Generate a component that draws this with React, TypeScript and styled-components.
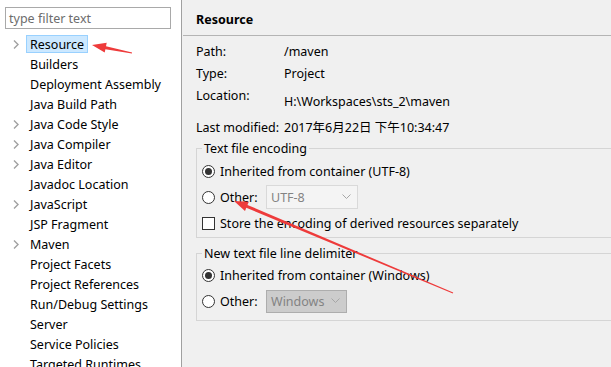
import styled, { createGlobalStyle } from "styled-components";

const GlobalStyle = createGlobalStyle`
  html, body {
    margin: 0;
    padding: 0;
    overflow: hidden;
    background: #f0f0f0;
  }
  body {
    font-family: "Noto Sans", "Noto Sans CJK SC", sans-serif;
    font-size: 12px;
    color: #000;
  }
`;

const Window = styled.div`
  position: relative;
  display: flex;
  width: 611px;
  height: 367px;
  overflow: hidden;
`;

const Sidebar = styled.div`
  width: 182px;
  flex-shrink: 0;
  background: #fff;
  border-right: 1px solid #a0a0a0;
  padding-top: 7px;
  box-sizing: border-box;
`;

const Filter = styled.div`
  margin-left: 5px;
  width: 166px;
  height: 22px;
  box-sizing: border-box;
  border: 1px solid #a9a9a9;
  padding-left: 3px;
  display: flex;
  align-items: center;
  color: #6d6d6d;
  font-size: 12.5px;
`;

const Tree = styled.ul`
  list-style: none;
  margin: 5px 0 0;
  padding: 0;
`;

const TreeRow = styled.li`
  height: 20px;
  display: flex;
  align-items: center;
  padding-left: 13px;
`;

const Twisty = styled.span`
  width: 13px;
  display: flex;
  align-items: center;
`;

const TreeLabel = styled.span<{ $selected?: boolean }>`
  height: 18px;
  line-height: 17px;
  box-sizing: border-box;
  padding: 0 3px;
  font-size: 12.5px;
  white-space: nowrap;
  border: 1px solid ${(p) => (p.$selected ? "#99d1ff" : "transparent")};
  background: ${(p) => (p.$selected ? "#cce8ff" : "transparent")};
`;

const Content = styled.div`
  flex: 1;
  margin-left: 1px;
  background: #f0f0f0;
  overflow: hidden;
`;

const Header = styled.div`
  height: 36px;
  box-sizing: border-box;
  border-bottom: 1px solid #b4b4b4;
  padding: 4px 0 0 13px;
  display: flex;
  align-items: center;
  font-weight: bold;
  font-size: 12.5px;
`;

const Body = styled.div`
  padding: 5px 0 0 13px;
`;

const InfoRow = styled.div<{ $h: number }>`
  display: grid;
  grid-template-columns: 88px auto;
  height: ${(p) => p.$h}px;
  line-height: 22px;
  white-space: nowrap;
  font-size: 12.5px;
`;

const InfoValue = styled.span<{ $offset?: number }>`
  padding-top: ${(p) => p.$offset || 0}px;
`;

const Group = styled.fieldset<{ $top: number; $pad: number; $bottom: number }>`
  margin: ${(p) => p.$top}px -20px 0 0;
  padding: ${(p) => p.$pad}px 0 ${(p) => p.$bottom}px 5px;
  border: 1px solid #d5d5d5;
  min-width: 0;
`;

const Legend = styled.legend`
  padding: 0 2px;
  font-size: 12.5px;
  line-height: 17px;
`;

const Option = styled.div`
  height: 26px;
  display: flex;
  align-items: center;
  gap: 5px;
  white-space: nowrap;
  font-size: 12.5px;
`;

const Radio = styled.span<{ $checked?: boolean }>`
  width: 13px;
  height: 13px;
  box-sizing: border-box;
  border-radius: 50%;
  border: 1px solid #333;
  background: #fff;
  display: flex;
  align-items: center;
  justify-content: center;
  flex-shrink: 0;
  &::after {
    content: "";
    width: 7px;
    height: 7px;
    border-radius: 50%;
    background: #333;
    display: ${(p) => (p.$checked ? "block" : "none")};
  }
`;

const Checkbox = styled.span`
  width: 13px;
  height: 13px;
  box-sizing: border-box;
  border: 1px solid #333;
  background: #fff;
  flex-shrink: 0;
`;

const OtherLabel = styled.span`
  width: 41px;
`;

const Combo = styled.div<{ $w: number; $h: number; $dark?: boolean }>`
  width: ${(p) => p.$w}px;
  height: ${(p) => p.$h}px;
  box-sizing: border-box;
  border: 1px solid ${(p) => (p.$dark ? "#adadad" : "#d9d9d9")};
  background: ${(p) => (p.$dark ? "#cccccc" : "#f4f4f4")};
  display: flex;
  align-items: center;
  justify-content: space-between;
  padding: 0 6px 0 4px;
  color: #838383;
`;

const Chevron = () => (
  <svg width="9" height="6" viewBox="0 0 9 6">
    <polyline points="0.5,0.5 4.5,4.5 8.5,0.5" fill="none" stroke="#a6a6a6" strokeWidth="1" />
  </svg>
);

const Twist = () => (
  <svg width="6" height="9" viewBox="0 0 6 9">
    <polyline points="1,0.5 5,4.5 1,8.5" fill="none" stroke="#a0a0a0" strokeWidth="1.4" />
  </svg>
);

const Overlay = styled.svg`
  position: absolute;
  left: 0;
  top: 0;
  pointer-events: none;
`;

function arrow(tx: number, ty: number, hx: number, hy: number) {
  const dx = hx - tx;
  const dy = hy - ty;
  const len = Math.hypot(dx, dy);
  const ux = dx / len;
  const uy = dy / len;
  const nx = -uy;
  const ny = ux;
  const headLen = 14;
  const headW = 5;
  const bx = hx - ux * headLen;
  const by = hy - uy * headLen;
  const p = (x: number, y: number) => `${x.toFixed(1)},${y.toFixed(1)}`;
  return [
    p(tx + nx * 0.5, ty + ny * 0.5),
    p(bx + nx * 1.5, by + ny * 1.5),
    p(bx + nx * headW, by + ny * headW),
    p(hx, hy),
    p(bx - nx * headW, by - ny * headW),
    p(bx - nx * 1.5, by - ny * 1.5),
    p(tx - nx * 0.5, ty - ny * 0.5),
  ].join(" ");
}

const items: [string, boolean][] = [
  ["Resource", true],
  ["Builders", false],
  ["Deployment Assembly", false],
  ["Java Build Path", false],
  ["Java Code Style", true],
  ["Java Compiler", true],
  ["Java Editor", true],
  ["Javadoc Location", false],
  ["JavaScript", true],
  ["JSP Fragment", false],
  ["Maven", true],
  ["Project Facets", false],
  ["Project References", false],
  ["Run/Debug Settings", false],
  ["Server", false],
  ["Service Policies", false],
  ["Targeted Runtimes", false],
];

export default function App() {
  return (
    <>
      <GlobalStyle />
      <Window>
        <Sidebar>
          <Filter>type filter text</Filter>
          <Tree>
            {items.map(([name, expandable], i) => (
              <TreeRow key={name}>
                <Twisty>{expandable && <Twist />}</Twisty>
                <TreeLabel $selected={i === 0}>{name}</TreeLabel>
              </TreeRow>
            ))}
          </Tree>
        </Sidebar>
        <Content>
          <Header>Resource</Header>
          <Body>
            <InfoRow $h={22}>
              <span>Path:</span>
              <InfoValue>/maven</InfoValue>
            </InfoRow>
            <InfoRow $h={22}>
              <span>Type:</span>
              <InfoValue>Project</InfoValue>
            </InfoRow>
            <InfoRow $h={32}>
              <span>Location:</span>
              <InfoValue $offset={6}>H:\Workspaces\sts_2\maven</InfoValue>
            </InfoRow>
            <InfoRow $h={22}>
              <span>Last modified:</span>
              <InfoValue>2017年6月22日 下午10:34:47</InfoValue>
            </InfoRow>
            <Group $top={1} $pad={1} $bottom={1}>
              <Legend>Text file encoding</Legend>
              <Option>
                <Radio $checked />
                <span>Inherited from container (UTF-8)</span>
              </Option>
              <Option>
                <Radio />
                <OtherLabel>Other:</OtherLabel>
                <Combo $w={92} $h={24}>
                  <span>UTF-8</span>
                  <Chevron />
                </Combo>
              </Option>
              <Option>
                <Checkbox />
                <span>Store the encoding of derived resources separately</span>
              </Option>
            </Group>
            <Group $top={7} $pad={0} $bottom={6}>
              <Legend>New text file line delimiter</Legend>
              <Option>
                <Radio $checked />
                <span>Inherited from container (Windows)</span>
              </Option>
              <Option>
                <Radio />
                <OtherLabel>Other:</OtherLabel>
                <Combo $w={81} $h={23} $dark>
                  <span>Windows</span>
                  <Chevron />
                </Combo>
              </Option>
            </Group>
          </Body>
        </Content>
        <Overlay width="611" height="367">
          <polygon points={arrow(132, 53, 92, 45)} fill="#ee3b3b" />
          <polygon points={arrow(453, 293, 234, 201)} fill="#ee3b3b" />
        </Overlay>
      </Window>
    </>
  );
}
